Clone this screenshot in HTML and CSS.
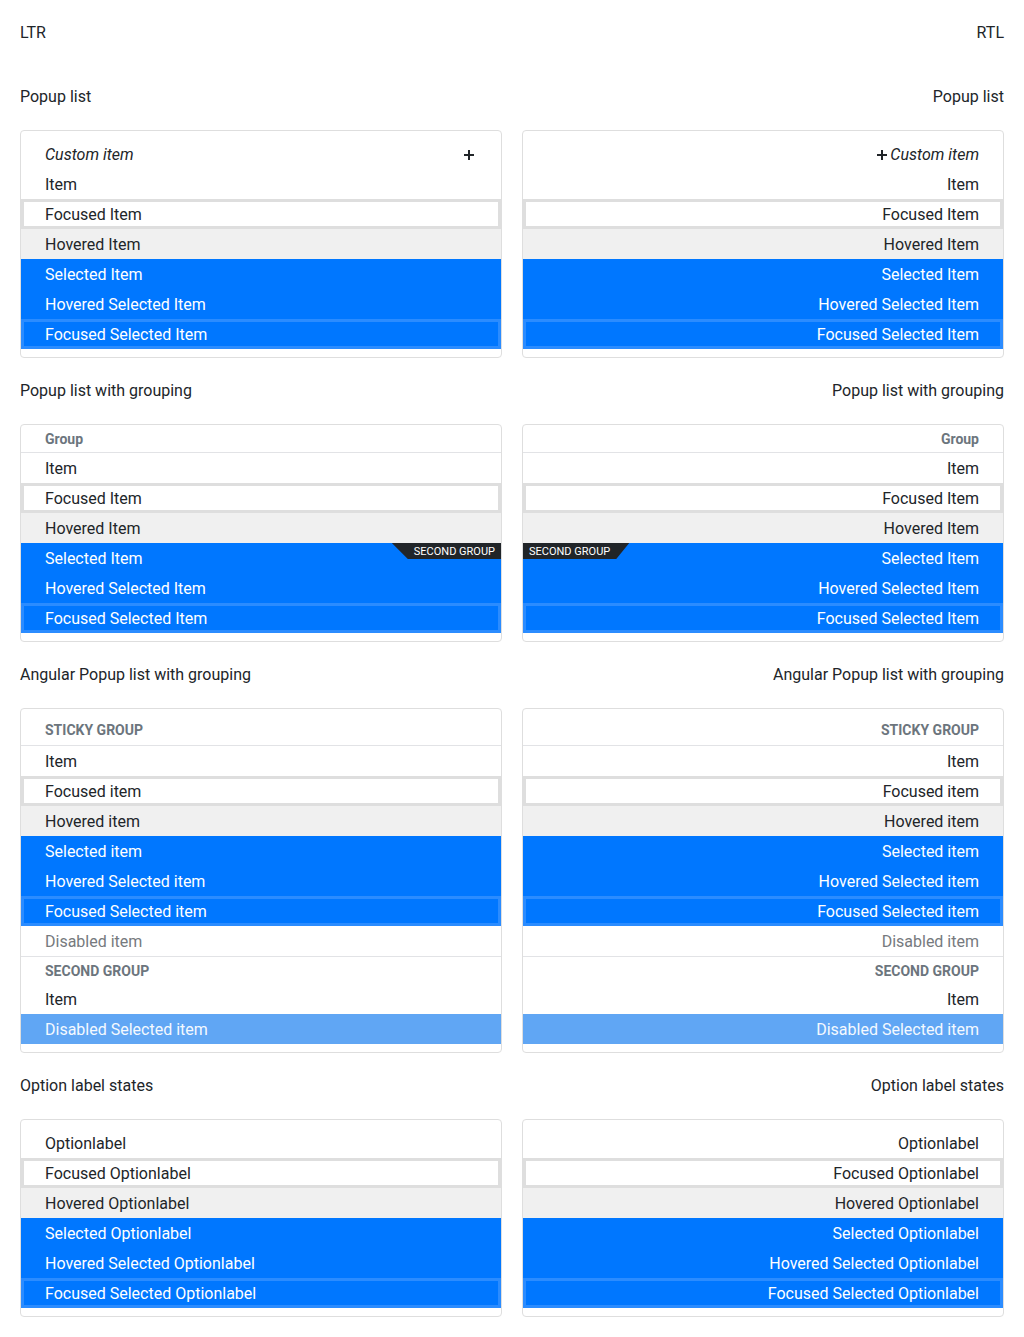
FILE: index.html
```html
<!DOCTYPE html>
<html lang="en">
<head>
<meta charset="utf-8">
<title>Popup list states</title>
<link rel="stylesheet" href="styles.css">
</head>
<body>
<div class="page">
  <div class="col" dir="ltr">
    <div class="dir-label">LTR</div>

    <div class="title first">Popup list</div>
    <div class="list padded">
      <div class="row custom spread"><span>Custom item</span><svg class="plus" width="16" height="16" viewBox="0 0 16 16"><path d="M8 3v10M3 8h10" stroke="#212529" stroke-width="2" fill="none"/></svg></div>
      <div class="row">Item</div>
      <div class="row focused">Focused Item</div>
      <div class="row hovered">Hovered Item</div>
      <div class="row selected">Selected Item</div>
      <div class="row selected">Hovered Selected Item</div>
      <div class="row selected focused">Focused Selected Item</div>
    </div>

    <div class="title">Popup list with grouping</div>
    <div class="list bottom-pad">
      <div class="group-head">Group</div>
      <div class="row">Item</div>
      <div class="row focused">Focused Item</div>
      <div class="row hovered">Hovered Item</div>
      <div class="row selected">Selected Item<span class="badge">SECOND GROUP</span></div>
      <div class="row selected">Hovered Selected Item</div>
      <div class="row selected focused">Focused Selected Item</div>
    </div>

    <div class="title">Angular Popup list with grouping</div>
    <div class="list bottom-pad">
      <div class="sticky-head">STICKY GROUP</div>
      <div class="row">Item</div>
      <div class="row focused">Focused item</div>
      <div class="row hovered">Hovered item</div>
      <div class="row selected">Selected item</div>
      <div class="row selected">Hovered Selected item</div>
      <div class="row selected focused">Focused Selected item</div>
      <div class="row disabled">Disabled item</div>
      <div class="inline-head">SECOND GROUP</div>
      <div class="row">Item</div>
      <div class="row disabled-selected">Disabled Selected item</div>
    </div>

    <div class="title">Option label states</div>
    <div class="list padded">
      <div class="row">Optionlabel</div>
      <div class="row focused">Focused Optionlabel</div>
      <div class="row hovered">Hovered Optionlabel</div>
      <div class="row selected">Selected Optionlabel</div>
      <div class="row selected">Hovered Selected Optionlabel</div>
      <div class="row selected focused">Focused Selected Optionlabel</div>
    </div>
  </div>

  <div class="col" dir="rtl">
    <div class="dir-label">RTL</div>

    <div class="title first">Popup list</div>
    <div class="list padded">
      <div class="row custom"><span>Custom item</span><svg class="plus" width="16" height="16" viewBox="0 0 16 16"><path d="M8 3v10M3 8h10" stroke="#212529" stroke-width="2" fill="none"/></svg></div>
      <div class="row">Item</div>
      <div class="row focused">Focused Item</div>
      <div class="row hovered">Hovered Item</div>
      <div class="row selected">Selected Item</div>
      <div class="row selected">Hovered Selected Item</div>
      <div class="row selected focused">Focused Selected Item</div>
    </div>

    <div class="title">Popup list with grouping</div>
    <div class="list bottom-pad">
      <div class="group-head">Group</div>
      <div class="row">Item</div>
      <div class="row focused">Focused Item</div>
      <div class="row hovered">Hovered Item</div>
      <div class="row selected">Selected Item<span class="badge badge-rtl">SECOND GROUP</span></div>
      <div class="row selected">Hovered Selected Item</div>
      <div class="row selected focused">Focused Selected Item</div>
    </div>

    <div class="title">Angular Popup list with grouping</div>
    <div class="list bottom-pad">
      <div class="sticky-head">STICKY GROUP</div>
      <div class="row">Item</div>
      <div class="row focused">Focused item</div>
      <div class="row hovered">Hovered item</div>
      <div class="row selected">Selected item</div>
      <div class="row selected">Hovered Selected item</div>
      <div class="row selected focused">Focused Selected item</div>
      <div class="row disabled">Disabled item</div>
      <div class="inline-head">SECOND GROUP</div>
      <div class="row">Item</div>
      <div class="row disabled-selected">Disabled Selected item</div>
    </div>

    <div class="title">Option label states</div>
    <div class="list padded">
      <div class="row">Optionlabel</div>
      <div class="row focused">Focused Optionlabel</div>
      <div class="row hovered">Hovered Optionlabel</div>
      <div class="row selected">Selected Optionlabel</div>
      <div class="row selected">Hovered Selected Optionlabel</div>
      <div class="row selected focused">Focused Selected Optionlabel</div>
    </div>
  </div>
</div>
</body>
</html>
```

FILE: styles.css
```css
html, body {
  margin: 0;
  padding: 0;
  background: #fff;
}

body {
  font-family: Roboto, "Liberation Sans", sans-serif;
  font-size: 16px;
  color: #212529;
}

.page {
  display: grid;
  grid-template-columns: 482px 482px;
  column-gap: 20px;
  padding: 20px;
}

.col {
  display: flex;
  flex-direction: column;
}

.dir-label {
  height: 24px;
  line-height: 26px;
}

.title {
  height: 24px;
  line-height: 26px;
  margin-top: 20px;
  margin-bottom: 22px;
}

.title.first {
  margin-top: 40px;
}

.list {
  border: 1px solid #dedede;
  border-radius: 4px;
  background: #fff;
}

.list.padded {
  padding: 8px 0;
}

.list.bottom-pad {
  padding: 0 0 8px;
}

.row {
  position: relative;
  height: 30px;
  line-height: 32px;
  padding: 0 24px;
  white-space: nowrap;
}

.row.custom {
  box-sizing: border-box;
  display: flex;
  align-items: center;
  padding-top: 2px;
  line-height: 28px;
  font-style: italic;
}

.row.custom.spread {
  justify-content: space-between;
}

.plus {
  display: block;
  flex: none;
}

.row.hovered {
  background: #f0f0f0;
}

.row.focused {
  box-shadow: inset 0 0 0 3px #dedede;
}

.row.selected {
  background: #0077ff;
  color: #fff;
}

.row.selected.focused {
  box-shadow: inset 0 0 0 3px #2b8cff;
}

.row.disabled {
  color: #767a7e;
}

.row.disabled-selected {
  background: #60a6f4;
  color: #f4f9ff;
}

.group-head {
  height: 27px;
  line-height: 29px;
  padding: 0 24px;
  font-size: 14px;
  font-weight: bold;
  color: #6c757d;
  border-bottom: 1px solid #e2e3e6;
}

.sticky-head {
  height: 29px;
  line-height: 29px;
  padding: 7px 24px 0;
  font-size: 14px;
  font-weight: bold;
  color: #6c757d;
  border-bottom: 1px solid #e2e3e6;
}

.inline-head {
  height: 27px;
  line-height: 29px;
  padding: 0 24px;
  font-size: 14px;
  font-weight: bold;
  color: #6c757d;
  border-top: 1px solid #e2e3e6;
}

.badge {
  position: absolute;
  top: 0;
  right: 0;
  height: 16px;
  line-height: 18px;
  font-size: 11px;
  font-style: normal;
  color: #fff;
  background: #212529;
  padding: 0 6px 0 22px;
  clip-path: polygon(0 0, 100% 0, 100% 100%, 16px 100%);
}

.badge.badge-rtl {
  right: auto;
  left: 0;
  padding: 0 19px 0 6px;
  clip-path: polygon(0 0, 100% 0, calc(100% - 13px) 100%, 0 100%);
}
```
